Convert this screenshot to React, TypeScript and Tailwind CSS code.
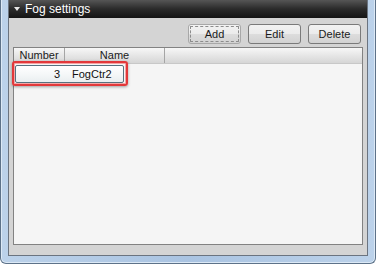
export default function App() {
  const font = { fontFamily: '"Liberation Sans", Arial, sans-serif' };
  return (
    <div className="w-[376px] h-[264px] bg-white" style={font}>
      <div className="w-[376px] h-[264px] rounded-b-[6px] border-x border-b border-[#5d7289] bg-[linear-gradient(90deg,#bcd2ea,#aac4e2_50%,#bcd2ea)] px-[7px] pb-[7px] flex shadow-[inset_1px_0_0_#dce9f6,inset_-1px_0_0_#dce9f6,inset_0_-1px_0_#dce9f6]">
        <div className="flex-1 flex flex-col border border-t-0 border-[#6b7480] bg-[#d4d4d4]">
          <div className="h-[18px] flex items-center bg-[linear-gradient(#555555,#2a2a2a_50%,#141414)] text-white">
            <svg width="6" height="4" viewBox="0 0 6 4" className="ml-[5px]">
              <polygon points="0,0 6,0 3,4" fill="#e8e8e8" />
            </svg>
            <span className="ml-[5px] text-[12px] leading-none">Fog settings</span>
          </div>
          <div className="flex-1 flex flex-col pt-[6px] pb-[10px]">
            <div className="flex justify-end gap-[7px] pr-[6px]">
              <button className="w-[53px] h-[20px] rounded-[3px] border border-[#a8a8a8] bg-[linear-gradient(#f2f2f2_0%,#ebebeb_50%,#dddddd_50%,#d2d2d2_100%)] text-[11px] text-[#1a1a1a] outline-1 outline-dashed outline-[#8c8c8c] outline-offset-[-3px]">
                Add
              </button>
              <button className="w-[53px] h-[20px] rounded-[3px] border border-[#7a7a7a] bg-[linear-gradient(#f2f2f2_0%,#ebebeb_50%,#dddddd_50%,#d2d2d2_100%)] text-[11px] text-[#1a1a1a]">
                Edit
              </button>
              <button className="w-[53px] h-[20px] rounded-[3px] border border-[#7a7a7a] bg-[linear-gradient(#f2f2f2_0%,#ebebeb_50%,#dddddd_50%,#d2d2d2_100%)] text-[11px] text-[#1a1a1a]">
                Delete
              </button>
            </div>
            <div className="relative flex-1 mt-[3px] mx-[4px] border border-[#828282] bg-[#f5f5f5] flex flex-col">
              <div className="h-[16px] flex bg-[linear-gradient(#f7f7f7,#e6e6e6_50%,#d6d6d6)] border-b border-[#c8c8c8] text-[11px] text-[#1a1a1a]">
                <div className="w-[51px] border-r border-[#a5a5a5] flex items-center justify-center leading-none">Number</div>
                <div className="w-[100px] border-r border-[#a5a5a5] flex items-center justify-center leading-none">Name</div>
                <div className="flex-1" />
              </div>
              <div className="ml-[1px] mt-[1px] w-[109px] h-[18px] flex items-center rounded-[2px] border border-[#56707e] bg-[linear-gradient(#ffffff,#f3f6f7_60%,#e9eef0)] text-[11px] text-[#111]">
                <div className="w-[44px] text-right leading-none">3</div>
                <div className="pl-[12px] leading-none">FogCtr2</div>
              </div>
              <div className="absolute left-[-2px] top-[13px] w-[116px] h-[25px] rounded-[3px] border-2 border-[#e2383a] shadow-[inset_0_0_0_1px_#f5a4a4,0_1px_3px_rgba(0,0,0,0.35)]" />
            </div>
          </div>
        </div>
      </div>
    </div>
  );
}
